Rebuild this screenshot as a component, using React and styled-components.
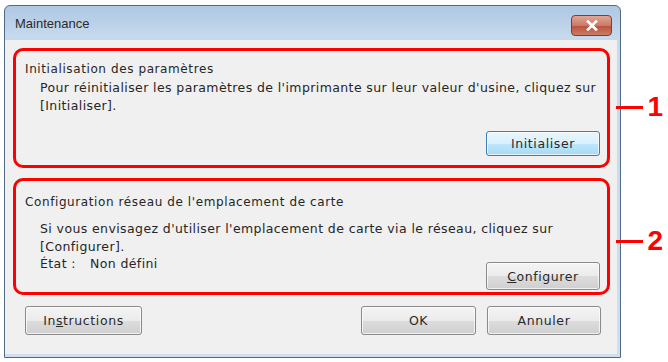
import React from "react";
import styled, { createGlobalStyle } from "styled-components";

const GlobalStyle = createGlobalStyle`
  html, body {
    margin: 0;
    padding: 0;
    background: #ffffff;
  }
  body {
    font-family: "DejaVu Sans", Verdana, sans-serif;
    color: #262626;
  }
`;

const Page = styled.div`
  width: 668px;
  height: 362px;
  padding: 5px 0 0 4px;
  box-sizing: border-box;
`;

const Window = styled.div`
  width: 617px;
  height: 353px;
  box-sizing: border-box;
  border: 1px solid #4f6b84;
  border-radius: 6px 6px 0 0;
  background: linear-gradient(#aec7e3, #c6d9ed 30px, #cfdff0);
  display: flex;
  flex-direction: column;
  padding: 0 3px 3px 0;
`;

const TitleBar = styled.div`
  height: 34px;
  display: flex;
  align-items: center;
  justify-content: space-between;
  padding: 0 5px 0 10px;
`;

const Title = styled.span`
  font-family: "Liberation Sans", Arial, sans-serif;
  font-size: 13px;
  color: #2b2b2b;
  margin-top: 1px;
`;

const CloseButton = styled.div`
  width: 41px;
  height: 21px;
  margin-top: 4px;
  box-sizing: border-box;
  border: 1px solid #6e4438;
  border-radius: 4px;
  background: linear-gradient(#e2a595, #c97a66 50%, #b9553f 55%, #cc7d66);
  display: flex;
  align-items: center;
  justify-content: center;
`;

const Client = styled.div`
  flex: 1;
  background: #f0f0f0;
  padding: 8px 7px 0 8px;
  display: flex;
  flex-direction: column;
  gap: 10px;
`;

const Section = styled.div`
  position: relative;
  border: 3px solid #ff0000;
  border-radius: 10px;
  height: ${(p) => p.$h}px;
  box-sizing: border-box;
  padding: ${(p) => p.$top}px 7px ${(p) => p.$bottom}px 9px;
  display: flex;
  flex-direction: column;
`;

const Heading = styled.div`
  font-size: 12px;
  line-height: 16px;
  letter-spacing: 0.6px;
`;

const Body = styled.div`
  font-size: 12.5px;
  line-height: 18px;
  letter-spacing: 0.4px;
  padding-left: 15px;
  margin-top: ${(p) => p.$gap}px;
`;

const BottomRow = styled.div`
  margin-top: auto;
  display: flex;
  align-items: flex-start;
  justify-content: flex-end;
`;

const Status = styled.div`
  font-size: 12.5px;
  line-height: 18px;
  letter-spacing: 0.4px;
  padding-left: 15px;
  margin: -7px auto 0 0;
  display: flex;
  gap: 14px;
`;

const Button = styled.div`
  width: ${(p) => p.$w || 114}px;
  height: ${(p) => p.$h || 26}px;
  box-sizing: border-box;
  border: 1px solid ${(p) => (p.$focus ? "#3c7fb1" : "#8a8a8a")};
  border-radius: 3px;
  background: ${(p) =>
    p.$focus
      ? "linear-gradient(#eaf6fd, #d9f0fc 50%, #bee6fd 51%, #a7d9f5)"
      : "linear-gradient(#f4f4f4, #ebebeb 50%, #dddddd 51%, #cfcfcf)"};
  box-shadow: inset 0 0 0 1px rgba(255, 255, 255, 0.7);
  display: flex;
  align-items: center;
  justify-content: center;
  font-size: 12.5px;
  letter-spacing: 0.6px;
  color: #2a2a2a;
`;

const Footer = styled.div`
  display: flex;
  align-items: center;
  padding: 1px 9px 0 12px;
  gap: 11px;
`;

const Spacer = styled.div`
  flex: 1;
`;

const Callout = styled.div`
  position: absolute;
  right: -56px;
  top: ${(p) => p.$top}px;
  display: flex;
  align-items: center;
  gap: 4px;
`;

const CalloutLine = styled.div`
  width: 27px;
  height: 3px;
  background: #ff0000;
`;

const CalloutNumber = styled.span`
  font-family: "Liberation Sans", Arial, sans-serif;
  font-weight: bold;
  font-size: 28px;
  line-height: 28px;
  color: #ff0000;
`;

export default function App() {
  return (
    <>
      <GlobalStyle />
      <Page>
        <Window>
          <TitleBar>
            <Title>Maintenance</Title>
            <CloseButton>
              <svg width="12" height="11" viewBox="0 0 12 11">
                <path
                  d="M2 1.5 L10 9.5 M10 1.5 L2 9.5"
                  stroke="#ffffff"
                  strokeWidth="2.6"
                  strokeLinecap="square"
                />
              </svg>
            </CloseButton>
          </TitleBar>
          <Client>
            <Section $h={120} $top={10} $bottom={9}>
              <Heading>Initialisation des paramètres</Heading>
              <Body $gap={2}>
                Pour réinitialiser les paramètres de l'imprimante sur leur valeur d'usine, cliquez sur
                <br />
                [Initialiser].
              </Body>
              <BottomRow>
                <Button $focus $h={25}>Initialiser</Button>
              </BottomRow>
              <Callout $top={42}>
                <CalloutLine />
                <CalloutNumber>1</CalloutNumber>
              </Callout>
            </Section>
            <Section $h={117} $top={13} $bottom={2}>
              <Heading>Configuration réseau de l'emplacement de carte</Heading>
              <Body $gap={10}>
                Si vous envisagez d'utiliser l'emplacement de carte via le réseau, cliquez sur
                <br />
                [Configurer].
              </Body>
              <BottomRow>
                <Status>
                  <span>État :</span>
                  <span>Non défini</span>
                </Status>
                <Button $h={28}>
                  <span>
                    <u>C</u>onfigurer
                  </span>
                </Button>
              </BottomRow>
              <Callout $top={46}>
                <CalloutLine />
                <CalloutNumber>2</CalloutNumber>
              </Callout>
            </Section>
            <Footer>
              <Button $w={117} $h={29}>
                <span>
                  In<u>s</u>tructions
                </span>
              </Button>
              <Spacer />
              <Button $w={115} $h={29}>OK</Button>
              <Button $w={114} $h={29}>Annuler</Button>
            </Footer>
          </Client>
        </Window>
      </Page>
    </>
  );
}
